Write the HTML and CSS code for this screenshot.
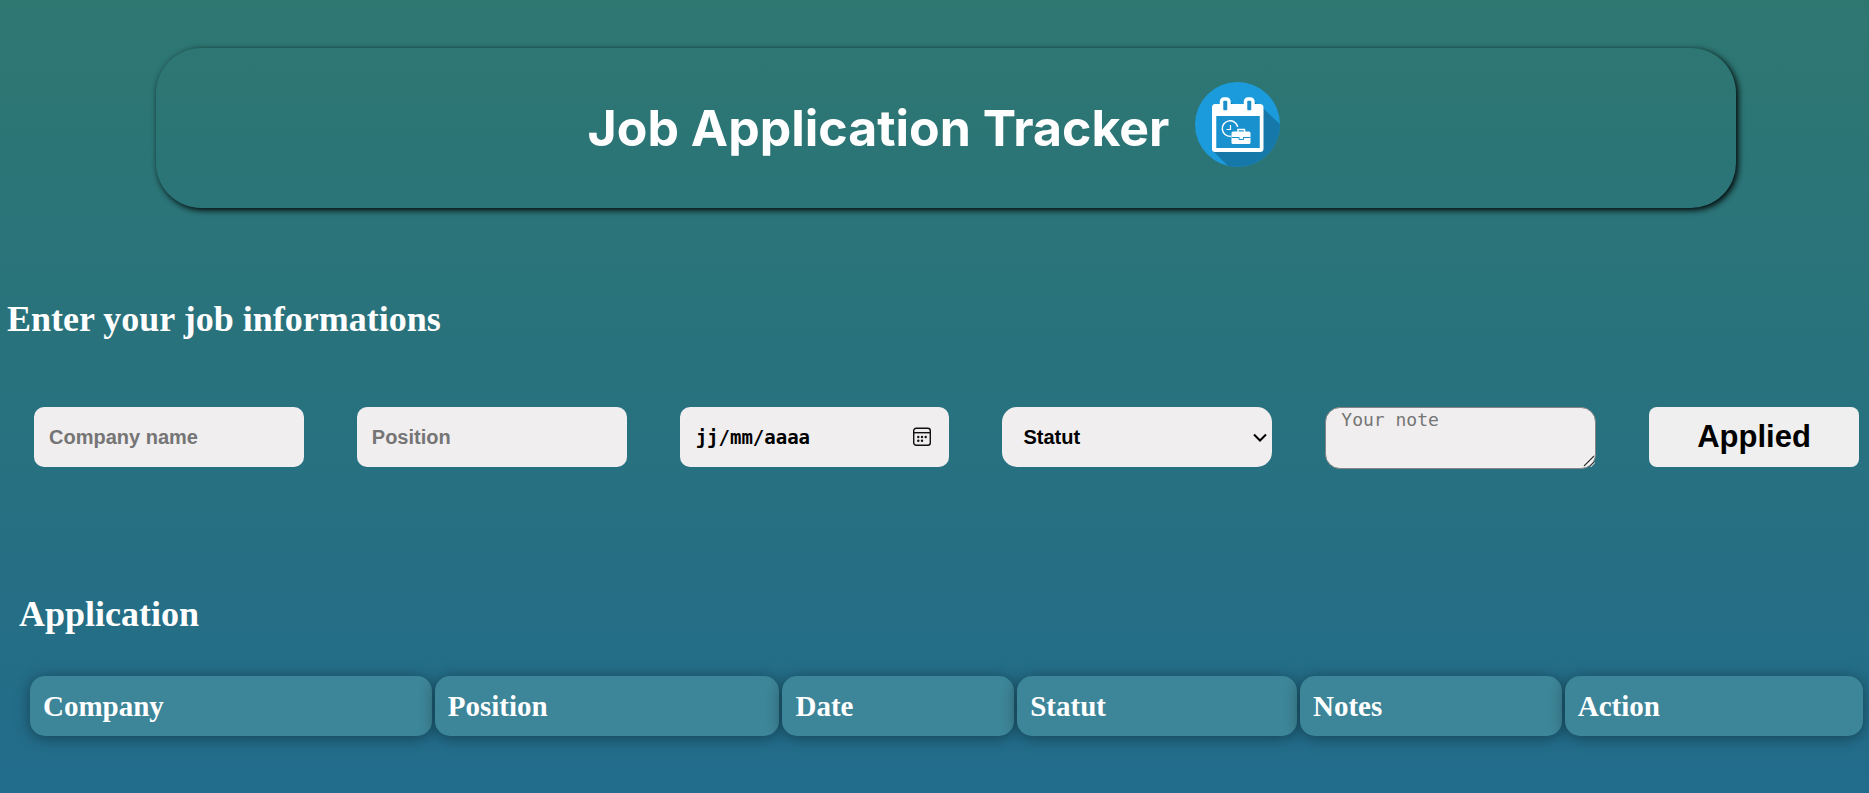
FILE: index.html
```html
<!DOCTYPE html>
<html lang="en">
<head>
<meta charset="utf-8">
<meta name="viewport" content="width=device-width, initial-scale=1">
<title>Job Application Tracker</title>
<link rel="stylesheet" href="styles.css">
</head>
<body>
<header class="banner">
  <h1 class="title">Job Application Tracker</h1>
  <svg class="logo" viewBox="0 0 85 85" aria-hidden="true">
    <defs><clipPath id="disc"><circle cx="42.500" cy="42.500" r="42.500"/></clipPath></defs>
    <g clip-path="url(#disc)">
      <rect width="85" height="85" fill="#1c9bdc"/>
      <path d="M68 26 95 52V95H44L18 69Z" fill="#1578a9"/>
      <path d="M34 18 42 26H34ZM58 18 66 26H58Z" fill="#1578a9"/>
    </g>
    <path fill="#fff" fill-rule="evenodd" d="M20 22H65Q68.500 22 68.500 25.500V67Q68.500 70 65 70H20Q17 70 17 67V25.500Q17 22 20 22ZM21.500 34V66H64.500V34Z"/>
    <rect x="21.500" y="34" width="43" height="32" fill="#1991cf"/>
    <rect x="26.500" y="17" width="7.500" height="13" rx="2.500" fill="#1c8fca" stroke="#fff" stroke-width="3.500"/>
    <rect x="50.500" y="17" width="7.500" height="13" rx="2.500" fill="#1c8fca" stroke="#fff" stroke-width="3.500"/>
    <path d="M36 54.300A7.800 7.800 0 1 1 42.700 45" fill="none" stroke="#fff" stroke-width="1.400"/>
    <path d="M35.500 43V47.500H31.500" fill="none" stroke="#fff" stroke-width="1.200"/>
    <path d="M43 50V47.500H49.500V50" fill="none" stroke="#fff" stroke-width="1.500"/>
    <rect x="36.500" y="49.500" width="19" height="12.500" rx="1.500" fill="#fff"/>
    <path d="M37 55.500H44M48.500 55.500H55.500M44 55V57.500H48.500V55" fill="none" stroke="#1991cf"/>
  </svg>
</header>
<main>
  <section class="entry">
    <h2 class="heading">Enter your job informations</h2>
    <form class="job-form">
      <input class="field" type="text" placeholder="Company name" aria-label="Company name">
      <input class="field" type="text" placeholder="Position" aria-label="Position">
      <div class="date-field">
        <input class="date-input" type="text" placeholder="jj/mm/aaaa" aria-label="Date">
        <button class="date-button" type="button" aria-label="Open calendar">
          <svg class="icon" viewBox="0 0 20 20" aria-hidden="true">
            <rect x="1.700" y="1.200" width="16.600" height="17" rx="2.500" fill="none" stroke="#111" stroke-width="1.400"/>
            <path d="M1.700 5.700H18.300" stroke="#111" stroke-width="1.400"/>
            <g fill="#111"><circle cx="6.300" cy="10" r="1.200"/><circle cx="10" cy="10" r="1.200"/><circle cx="13.700" cy="10" r="1.200"/><circle cx="6.300" cy="13.800" r="1.200"/><circle cx="10" cy="13.800" r="1.200"/></g>
          </svg>
        </button>
      </div>
      <div class="select-field">
        <select class="select" aria-label="Statut"><option>Statut</option></select>
        <svg class="chevron" viewBox="0 0 14 9" aria-hidden="true"><path d="M1 1.500 7 7.500 13 1.500" fill="none" stroke="#000" stroke-width="2"/></svg>
      </div>
      <div class="note-field">
        <textarea class="note" placeholder="Your note" aria-label="Your note"></textarea>
        <svg class="grip" viewBox="0 0 12 12" aria-hidden="true"><path d="M1 11 11 1M7 11 11 7" stroke="#fff" stroke-width="3"/><path d="M1 11 11 1M7 11 11 7" stroke="#333" stroke-width="1.300"/></svg>
      </div>
      <button class="submit" type="button">Applied</button>
    </form>
  </section>
  <section class="applications">
    <h2 class="heading">Application</h2>
    <table class="table">
      <colgroup><col class="c-company"><col class="c-position"><col class="c-date"><col class="c-statut"><col class="c-notes"><col class="c-action"></colgroup>
      <thead>
        <tr><th scope="col">Company</th><th scope="col">Position</th><th scope="col">Date</th><th scope="col">Statut</th><th scope="col">Notes</th><th scope="col">Action</th></tr>
      </thead>
    </table>
  </section>
</main>
</body>
</html>
```

FILE: styles.css
```css
* { box-sizing: border-box; }

body {
  margin: 0;
  min-height: 100vh;
  padding-top: 48px;
  color: #fff;
  font-family: "Liberation Serif", "Times New Roman", serif;
  background: linear-gradient(#2e7771, #226c8c) no-repeat;
}

.banner {
  display: flex;
  align-items: center;
  justify-content: center;
  gap: 26px;
  height: 160px;
  margin: 0 133px 0 156px;
  padding: 0 24px 8px 0;
  border-radius: 45px;
  box-shadow: 2px 2px 6px #000;
}

.title {
  margin: 0;
  padding-top: 8px;
  font: 700 50px/72px Inter, sans-serif;
}

.logo { width: 85px; height: 85px; }

.heading {
  margin: 0;
  font-size: 36px;
  line-height: 42px;
}

.entry { padding: 90px 10px 0 7px; }

.job-form {
  display: grid;
  grid-template-columns: repeat(4, minmax(0, 270fr)) minmax(0, 271fr) minmax(0, 210fr);
  gap: 53px;
  margin: 67px 0 0 27px;
}

.field,
.date-field,
.select-field,
.note {
  width: 100%;
  height: 60px;
  border: 0;
  border-radius: 10px;
  background: #f0eeef;
}

.field {
  padding: 0 15px;
  font: bold 20px "Liberation Sans", Arial, sans-serif;
}

.field::placeholder,
.note::placeholder { color: #757575; }

.date-field {
  display: flex;
  align-items: center;
  padding: 0 17px 0 16px;
}

.date-input {
  flex: 1;
  min-width: 0;
  padding: 0;
  border: 0;
  background: none;
  font: bold 19px "DejaVu Sans Mono", monospace;
}

.date-input::placeholder { color: #000; opacity: 1; }

.date-button {
  width: 20px;
  height: 20px;
  padding: 0;
  border: 0;
  background: none;
}

.icon { display: block; width: 20px; height: 20px; }

.select-field {
  display: grid;
  align-items: center;
  border-radius: 15px;
}

.select {
  grid-area: 1 / 1;
  width: 100%;
  height: 60px;
  padding: 0 21px;
  border: 0;
  border-radius: 15px;
  appearance: none;
  background: none;
  color: #000;
  font: bold 20px "Liberation Sans", Arial, sans-serif;
}

.chevron {
  grid-area: 1 / 1;
  justify-self: end;
  width: 14px;
  height: 9px;
  margin-right: 5px;
  pointer-events: none;
}

.note-field { position: relative; }

.note {
  display: block;
  height: 62px;
  padding: 0 15px;
  border: 1px solid #858585;
  border-radius: 15px;
  font: 18px/24px "DejaVu Sans Mono", monospace;
  resize: none;
}

.grip {
  position: absolute;
  right: 1px;
  bottom: 2px;
  width: 12px;
  height: 12px;
  pointer-events: none;
}

.submit {
  height: 60px;
  padding: 0;
  border: 0;
  border-radius: 8px;
  background: #efefef;
  color: #000;
  font: bold 31px "Liberation Sans", Arial, sans-serif;
}

.applications { padding: 124px 3px 40px 19px; }

.table {
  width: 100%;
  margin-top: 38px;
  padding-left: 8px;
  border-spacing: 3px;
  table-layout: fixed;
}

.table th {
  height: 60px;
  padding: 0 13px;
  border-radius: 15px;
  background: #3d8598;
  box-shadow: 0 2px 15px rgba(0, 0, 0, 0.4);
  font-size: 29px;
  line-height: 32px;
  text-align: left;
}

.c-company { width: 22.1%; }
.c-position { width: 18.96%; }
.c-date { width: 12.75%; }
.c-statut { width: 15.39%; }
.c-notes { width: 14.4%; }
.c-action { width: 16.4%; }
```
